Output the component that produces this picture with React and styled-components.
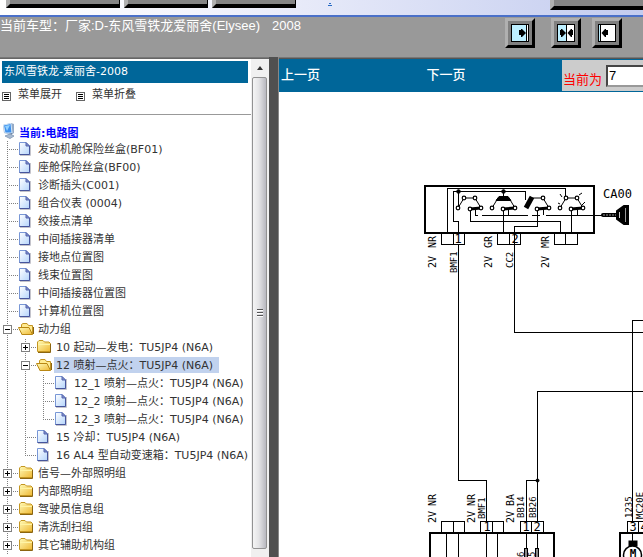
import React, { useState } from "react";
import styled, { createGlobalStyle } from "styled-components";

const treeData = [
  { label: '发动机舱保险丝盒(BF01)' },
  { label: '座舱保险丝盒(BF00)' },
  { label: '诊断插头(C001)' },
  { label: '组合仪表 (0004)' },
  { label: '绞接点清单' },
  { label: '中间插接器清单' },
  { label: '接地点位置图' },
  { label: '线束位置图' },
  { label: '中间插接器位置图' },
  { label: '计算机位置图' },
  {
    label: '动力组',
    open: true,
    children: [
      { label: '10 起动—发电：TU5JP4 (N6A)', children: [] },
      {
        label: '12 喷射—点火：TU5JP4 (N6A)',
        open: true,
        children: [
          { label: '12_1 喷射—点火：TU5JP4 (N6A)' },
          { label: '12_2 喷射—点火：TU5JP4 (N6A)' },
          { label: '12_3 喷射—点火：TU5JP4 (N6A)' },
        ],
      },
      { label: '15 冷却：TU5JP4 (N6A)' },
      { label: '16 AL4 型自动变速箱：TU5JP4 (N6A)' },
    ],
  },
  { label: '信号—外部照明组', children: [] },
  { label: '内部照明组', children: [] },
  { label: '驾驶员信息组', children: [] },
  { label: '清洗刮扫组', children: [] },
  { label: '其它辅助机构组', children: [], more: true },
];

const PageIcon = () => (
  <svg width="18" height="18" viewBox="0 0 18 18" aria-hidden="true">
    <defs>
      <linearGradient id="sheet" x1="0" y1="0" x2="1" y2="1">
        <stop offset="0" stopColor="#fff" />
        <stop offset="1" stopColor="#b4d4fb" />
      </linearGradient>
    </defs>
    <path d="M2 14.5H12.5V4" fill="none" stroke="#c4c4cc" />
    <path d="M1.5 1.5H8L11.5 5V13.5H1.5Z" fill="url(#sheet)" stroke="#7897d6" />
    <path d="M11.5 5V13.5H1.5" fill="none" stroke="#46559c" />
    <path d="M8 1.5V5H11.5Z" fill="#8493d0" stroke="#5565ac" />
  </svg>
);

const FolderIcon = ({ open }) => (
  <svg width="18" height="18" viewBox="0 0 18 18" aria-hidden="true">
    <defs>
      <linearGradient id="folder" x1="0" y1="0" x2="1" y2="1">
        <stop offset="0" stopColor="#fffbb8" />
        <stop offset="1" stopColor="#efb833" />
      </linearGradient>
    </defs>
    {open ? (
      <>
        <path d="M3.5 13V3.5L5 2.5H9L10.5 4.5H14.5V13Z" fill="#ffeb91" stroke="#c39422" />
        <path d="M.5 6.5H11L14.5 13.5H4Z" fill="url(#folder)" stroke="#b98713" />
        <path d="M15.5 6V13" stroke="#8b6510" />
      </>
    ) : (
      <>
        <path d="M1.5 12.5V3L3 1.5H7L8.5 3H13L14.5 4.5V12.5Z" fill="url(#folder)" stroke="#c49622" />
        <path d="M2 5.5H14" stroke="#fff4a5" />
        <path d="M2 13.5H14.5V5" fill="none" stroke="#8b6510" />
      </>
    )}
  </svg>
);

const ComputerIcon = () => (
  <svg width="16" height="18" viewBox="0 0 16 18" aria-hidden="true">
    <path d="M1 2L9 0L12 1V10L9 12L2 10Z" fill="#96abc6" />
    <path d="M1.5 2L9 .5L10 10L3 10Z" fill="#3e91ed" stroke="#d1e5f8" />
    <path d="M3 3L8 2L5 8Z" fill="#91d0ff" />
    <path d="M7 11L10 10V13H7Z" fill="#607b9d" />
    <path d="M3 13L8 11L12 13L8 15.5Z" fill="#a8bad0" stroke="#8fa3bd" />
  </svg>
);

const ListIcon = () => (
  <svg width="9" height="9" viewBox="0 0 9 9" aria-hidden="true">
    <rect x=".5" y=".5" width="8" height="8" fill="#fff" stroke="#666" />
    <path d="M2 2.5H7M2 4.5H7M2 6.5H7" stroke="#000" />
  </svg>
);

// dotted guide inside one indent cell
const Guide = ({ type }) => (
  <svg width="18" height="18" viewBox="0 0 18 18" aria-hidden="true">
    <g stroke="#808080" strokeDasharray="1 1" fill="none">
      {type !== 'none' && <path d={type === 'elbow' ? 'M7.5 0V9' : 'M7.5 0V18'} />}
      {(type === 'tee' || type === 'elbow') && <path d="M9 8.5H18" />}
    </g>
  </svg>
);

const ToggleIcon = ({ open }) => (
  <svg width="9" height="9" viewBox="0 0 9 9" aria-hidden="true">
    <rect x=".5" y=".5" width="8" height="8" fill="#fff" stroke="#808080" />
    <path d={open ? 'M2 4.5H7' : 'M2 4.5H7M4.5 2V7'} stroke="#000" />
  </svg>
);

const TreeNode = ({ node, trail, last, selected, onSelect }) => {
  const [open, setOpen] = useState(Boolean(node.open));
  const isFolder = Boolean(node.children);
  const isLast = last && !node.more;

  return (
    <li>
      <TreeRow>
        {trail.map((type, i) => <Guide key={i} type={type} />)}
        <GuideCell>
          <Guide type={isLast ? 'elbow' : 'tee'} />
          {isFolder && (
            <Toggle aria-label={node.label} aria-expanded={open} onClick={() => setOpen(!open)}>
              <ToggleIcon open={open} />
            </Toggle>
          )}
        </GuideCell>
        {isFolder ? <FolderIcon open={open} /> : <PageIcon />}
        <TreeLink
          href="#"
          $active={selected === node.label}
          onClick={(e) => { e.preventDefault(); onSelect(node.label); }}
        >
          {node.label}
        </TreeLink>
      </TreeRow>
      {isFolder && open && node.children.length > 0 && (
        <TreeList>
          {node.children.map((child, i) => (
            <TreeNode
              key={child.label}
              node={child}
              trail={[...trail, isLast ? 'none' : 'bar']}
              last={i === node.children.length - 1}
              selected={selected}
              onSelect={onSelect}
            />
          ))}
        </TreeList>
      )}
    </li>
  );
};

const Sidebar = () => {
  const [selected, setSelected] = useState('12 喷射—点火：TU5JP4 (N6A)');

  return (
    <SidebarFrame>
      <SidebarContent>
        <SidebarTitle>东风雪铁龙-爱丽舍-2008</SidebarTitle>
        <MenuBar>
          <MenuButton><ListIcon />菜单展开</MenuButton>
          <MenuButton><ListIcon />菜单折叠</MenuButton>
        </MenuBar>
        <RootRow><ComputerIcon />当前:电路图</RootRow>
        <TreeList>
          {treeData.map((node, i) => (
            <TreeNode
              key={node.label}
              node={node}
              trail={[]}
              last={i === treeData.length - 1}
              selected={selected}
              onSelect={setSelected}
            />
          ))}
        </TreeList>
      </SidebarContent>
      <ScrollBar>
        <ScrollArrow aria-label="向上滚动">
          <svg width="8" height="4" viewBox="0 0 8 4"><path d="M4 0L7 4H1Z" fill="#333" /></svg>
        </ScrollArrow>
        <ScrollThumb>
          <svg width="8" height="9" viewBox="0 0 8 9">
            <path d="M1 .5H7M1 3.5H7M1 6.5H7" stroke="#555" />
            <path d="M1 1.5H7M1 4.5H7M1 7.5H7" stroke="#fff" />
          </svg>
        </ScrollThumb>
      </ScrollBar>
    </SidebarFrame>
  );
};

const Contact = ({ points }) => points.map(([x, y]) => (
  <circle key={`${x}-${y}`} cx={x} cy={y} r="1.8" fill="#fff" stroke="#000" strokeWidth="1.2" />
));

const verticalLabels = [
  // x, bottom y, text, size
  [436, 248, 'NR', 10], [436, 268, '2V', 10], [457, 273, 'BMF1', 9],
  [492, 248, 'GR', 10], [492, 268, '2V', 10], [513, 268, 'CC2', 9],
  [549, 248, 'MR', 10], [549, 268, '2V', 10],
  [436, 506, 'NR', 10], [436, 523, '2V', 10],
  [475, 506, 'NR', 10], [475, 523, '2V', 10], [485, 519, 'BMF1', 9],
  [514, 506, 'BA', 10], [514, 523, '2V', 10], [524, 518, 'BB14', 9], [536, 518, 'BB26', 9],
  [632, 518, '1235', 9], [643, 519, 'MC20E', 9],
  [524, 557, '6', 9], [535, 557, '5', 9],
];

const pinLabels = [
  [458, 243, '1'], [515, 243, '2'], [487, 531, '1'], [526, 531, '1'], [537, 531, '2'],
  [633, 531, '3'], [644, 531, '4'],
];

// wiring sheet, drawn in its own sheet coordinates
const Diagram = () => (
  <Sheet role="img" aria-label="电路图">
    <g transform="translate(-279 -92)" fill="none" stroke="#000">
      <rect x="425" y="186" width="169" height="47" strokeWidth="2" />
      <g shapeRendering="crispEdges">
        <path d="M447.5 233V188.5H565.5V196" />
        <path d="M458.5 233V221.5H453.5V191.5H525.5V200M458.5 191V206M503.5 191V198" />
        <path d="M470.5 210V221.5H560.5V233" />
        <path d="M503.5 210V233M571.5 210V233M537.5 210V226.5H514.5V333" />
        <path d="M475.5 210V215.5H478M482 215.5H528M532 215.5H540M546 215.5H602" />
        <path d="M508.5 210V215M543.5 210V215M577.5 210V215" />
        <path d="M458.5 244V480.5H486.5V521" />
        <path d="M514.5 332.5H2000M537.5 521V391.5H2000M632.5 521V320.5H2000" />
        <path d="M537.5 480.5H526.5V521" />
        <path d="M441.5 233V244.5H464.5V233M453.5 233V244M497.5 233V244.5H520.5V233M509.5 233V244M554.5 233V244.5H577.5V233M565.5 233V244" />
        <path d="M441.5 533V521.5H464.5V533M453.5 521V533M480.5 533V521.5H503.5V533M492.5 521V533M520.5 533V521.5H543.5V533M531.5 521V533M627.5 533V521.5H662M638.5 521V533" />
        <path d="M446.5 533V557M458.5 533V557M486.5 533V557M497.5 533V557M526.5 533V557M537.5 533V557M632.5 533V545" />
        <path d="M430 557V533H554V557M620 557V533H700" strokeWidth="2" />
      </g>
      <path d="M458 208L464 198H475L481 208M492 208L498 198H509L515 208M532 198H543L549 208M560 208L566 198H577L583 208" />
      <path d="M470 209L481 208M503 209L515 208M537 209L549 208M571 209L583 208" strokeWidth="3" />
      <path d="M499 196.5H508L511 200.5H496Z" fill="#000" />
      <path d="M532 197L526 208" strokeWidth="5" />
      <Contact points={[[458, 208], [464, 198], [475, 198], [481, 208], [470, 209]]} />
      <Contact points={[[492, 208], [515, 208], [503, 209]]} />
      <Contact points={[[543, 198], [549, 208], [537, 209]]} />
      <Contact points={[[560, 208], [566, 198], [577, 198], [583, 208], [571, 209]]} />
      <path d="M560 204L558 203M562 197L560 194M579 195L582 193M582 205L585 202" />
      <circle cx="458.5" cy="191.5" r="1.8" fill="#000" />
      <circle cx="503.5" cy="191.5" r="1.8" fill="#000" />
      <circle cx="537.5" cy="480.5" r="1.5" fill="#000" />
      <path d="M603 215H617" strokeWidth="4" strokeLinecap="round" />
      <path d="M603 215H616" stroke="#999" strokeDasharray="2 1" />
      <path d="M617 211L624 206H628V224H624L617 219Z" fill="#000" strokeWidth="2" />
      <path d="M619.5 212V218" stroke="#ccc" />
      <path d="M625.5 208V222" stroke="#999" />
      <rect x="524.5" y="548.5" width="3" height="12" fill="#888" />
      <rect x="535.5" y="548.5" width="3" height="12" fill="#888" />
      <rect x="629" y="541" width="8" height="5" fill="#000" />
      <circle cx="632.5" cy="555" r="9" fill="#fff" strokeWidth="1.5" />
      <g fill="#000" stroke="none">
        <SheetText x="603" y="198" $size={12}>CA00</SheetText>
        <SheetText x="633" y="557" $size={11} $bold textAnchor="middle">M</SheetText>
        {pinLabels.map(([x, y, text]) => (
          <SheetText key={`${x}-${y}`} x={x} y={y} $size={12} textAnchor="middle">{text}</SheetText>
        ))}
        {verticalLabels.map(([x, y, text, size]) => (
          <SheetText key={`${x}-${y}`} $size={size} transform={`translate(${x} ${y}) rotate(-90)`}>
            {text}
          </SheetText>
        ))}
      </g>
    </g>
  </Sheet>
);

const App = () => {
  const [page, setPage] = useState('7');

  return (
    <PageContainer>
      <GlobalStyle />
      <Banner>
        <BannerTabs>
          <BannerTab $width={114} aria-label="资料一" />
          <BannerTab $width={84} aria-label="资料二" />
          <BannerTab $width={84} aria-label="资料三" />
        </BannerTabs>
        <BannerMark width="4" height="3" viewBox="0 0 4 3" aria-hidden="true">
          <path d="M1 .5H3M0 2.5H4" stroke="#286bc4" />
        </BannerMark>
        <BannerTab $width={100} $tall aria-label="资料四" />
      </Banner>
      <InfoBar>
        <CarName>当前车型：厂家:D-东风雪铁龙爱丽舍(Elysee)<span>2008</span></CarName>
        <LayoutButtons>
          <BevelButton aria-label="展开左侧">
            <svg width="18" height="18" viewBox="0 0 18 18">
              <rect x=".5" y=".5" width="17" height="17" fill="#fff" stroke="#000" />
              <path d="M1 1H15V17H1Z" fill="#bdefff" />
              <path d="M15.5 1V17" stroke="#000" />
              <path d="M8 6H10V5H11L15 9L11 13H10V11H8Z" fill="#000" />
            </svg>
          </BevelButton>
          <BevelButton $gap={16} aria-label="左右均分">
            <svg width="18" height="18" viewBox="0 0 18 18">
              <rect x=".5" y=".5" width="17" height="17" fill="#fff" stroke="#000" />
              <path d="M1 1H9V17H1Z" fill="#bdefff" />
              <path d="M9.5 1V17" stroke="#000" />
              <path d="M3 6H4V5H5L9 9L5 13H4V11H3ZM16 6H15V5H14L10.5 9L14 13H15V11H16Z" fill="#000" />
            </svg>
          </BevelButton>
          <BevelButton $gap={11} aria-label="展开右侧">
            <svg width="18" height="18" viewBox="0 0 18 18">
              <rect x=".5" y=".5" width="17" height="17" fill="#fff" stroke="#000" />
              <path d="M1 1H2V17H1Z" fill="#bdefff" />
              <path d="M2.5 1V17" stroke="#000" />
              <path d="M10 6H8V5H7L3.5 9L7 13H8V11H10Z" fill="#000" />
            </svg>
          </BevelButton>
        </LayoutButtons>
      </InfoBar>
      <Frames>
        <Sidebar />
        <Splitter />
        <MainFrame>
          <PagerBar>
            <PagerLink href="#">上一页</PagerLink>
            <PagerLink href="#">下一页</PagerLink>
            <PageField>
              <label htmlFor="page">当前为</label>
              <PageInput id="page" value={page} onChange={(e) => setPage(e.target.value)} />
            </PageField>
          </PagerBar>
          <Diagram />
        </MainFrame>
      </Frames>
    </PageContainer>
  );
};

export default App;

const GlobalStyle = createGlobalStyle`
* {
  box-sizing: border-box;
}

body {
  font-family: 'DejaVu Sans', 'Noto Sans CJK SC', sans-serif;
  font-size: 11px;
  margin: 0;
  overflow: hidden;
}

svg {
  display: block;
  flex: none;
}
`;

const PageContainer = styled.div`
background: #999;
display: flex;
flex-direction: column;
height: 100vh;
`;

const Banner = styled.header`
align-items: flex-start;
background: linear-gradient(to right, #fff, #f3f4fc 30%, #c3ccef);
border-bottom: 2px solid #4a70c9;
display: flex;
height: 17px;
justify-content: space-between;
overflow: hidden;
padding-left: 6px;
`;

const BannerTabs = styled.div`
display: flex;
gap: 4px;
`;

const BannerTab = styled.button`
background: #858585;
border: solid #000;
border-left-color: #b0b0b0;
border-width: 0 1px 4px 4px;
flex: none;
height: ${props => props.$tall ? '10px' : '8px'};
margin-right: ${props => props.$tall ? '-7px' : '0'};
padding: 0;
width: ${props => props.$width}px;
`;

const BannerMark = styled.svg`
margin: 3px auto 0 32px;
`;

const InfoBar = styled.div`
border-bottom: 1px solid #777;
display: flex;
height: 41px;
justify-content: space-between;
`;

const CarName = styled.div`
color: #fff;
font-family: 'Liberation Sans', 'Noto Sans CJK SC', sans-serif;
font-size: 13px;
line-height: 18px;
white-space: nowrap;

span {
  margin-left: 12px;
}
`;

const LayoutButtons = styled.div`
display: flex;
margin: 1px 21px 0 0;
`;

const BevelButton = styled.button`
align-items: center;
background: #808080;
border: 3px solid;
border-color: #b0b0b0 #000 #000 #b0b0b0;
display: flex;
height: 30px;
justify-content: center;
margin-left: ${props => props.$gap || 0}px;
padding: 0;
width: 30px;
`;

const Frames = styled.div`
display: flex;
flex: 1;
min-height: 0;
`;

const SidebarFrame = styled.aside`
background: #fff;
border-top: 1px solid #666;
display: flex;
flex: none;
width: 269px;
`;

const SidebarContent = styled.div`
color: #333;
flex: 1;
min-width: 0;
overflow: hidden;
`;

const SidebarTitle = styled.div`
background: #069;
color: #fff;
line-height: 22px;
margin: 2px 3px 0 2px;
padding-left: 2px;
`;

const MenuBar = styled.div`
align-items: center;
border-bottom: 1px solid #999;
display: flex;
gap: 14px;
height: 32px;
padding: 0 2px 8px;
`;

const MenuButton = styled.button`
align-items: flex-end;
background: none;
border: none;
color: #333;
display: flex;
font: inherit;
gap: 7px;
line-height: 13px;
padding: 0;
`;

const RootRow = styled.div`
align-items: center;
color: #00f;
display: flex;
font-weight: bold;
gap: 1px;
height: 18px;
margin-top: 8px;
padding-left: 2px;
`;

const TreeList = styled.ul`
list-style: none;
margin: 0;
padding: 0;
`;

const TreeRow = styled.div`
display: flex;
height: 18px;
`;

const GuideCell = styled.span`
display: flex;
position: relative;
`;

const Toggle = styled.button`
background: none;
border: none;
left: 3px;
padding: 0;
position: absolute;
top: 4px;
`;

const TreeLink = styled.a`
background: ${props => props.$active ? '#c1d2ee' : 'transparent'};
color: #333;
height: 16px;
line-height: 18px;
padding: 0 ${props => props.$active ? '6px' : '2px'} 0 2px;
text-decoration: none;
white-space: nowrap;
`;

const ScrollBar = styled.div`
background: #f0f0f0;
display: flex;
flex-direction: column;
padding: 0 2px 8px 1px;
width: 18px;
`;

const ScrollArrow = styled.button`
align-items: center;
background: none;
border: none;
display: flex;
height: 18px;
justify-content: center;
padding: 0;
`;

const ScrollThumb = styled.div`
align-items: center;
background: linear-gradient(to right, #f5f5f5, #e4e4e6 45%, #b8b8bf);
border: 1px solid #929292;
border-radius: 2px;
display: flex;
flex: 1;
justify-content: center;
`;

const Splitter = styled.div`
background: #505050;
border-right: 1px solid #888;
flex: none;
margin-top: -1px;
width: 10px;
`;

const MainFrame = styled.main`
background: #fff;
border-top: 1px solid #555;
display: flex;
flex: 1;
flex-direction: column;
min-width: 0;
overflow: hidden;
`;

const PagerBar = styled.nav`
background: #069;
display: grid;
flex: none;
font-family: 'Liberation Sans', 'Noto Sans CJK SC', sans-serif;
font-size: 13px;
grid-template-columns: 40% 1fr 81px;
height: 33px;
padding: 1px 0;
`;

const PagerLink = styled.a`
color: #fff;
font-weight: 500;
line-height: 30px;
padding-left: 2px;
text-decoration: none;
`;

const PageField = styled.div`
align-items: center;
background: #ccc;
color: #f00;
display: flex;
gap: 4px;
overflow: hidden;
padding-left: 1px;

label {
  flex: none;
  padding-top: 6px;
}
`;

const PageInput = styled.input`
background: #fff;
border: 2px inset #999;
flex: none;
font-family: 'Liberation Sans', sans-serif;
font-size: 13px;
height: 22px;
padding: 0 1px;
width: 60px;
`;

const Sheet = styled.svg`
flex: 1;
min-height: 0;
width: 100%;
`;

const SheetText = styled.text`
font-family: 'DejaVu Sans Mono', monospace;
font-size: ${props => props.$size}px;
font-weight: ${props => props.$bold ? 'bold' : 'normal'};
`;
